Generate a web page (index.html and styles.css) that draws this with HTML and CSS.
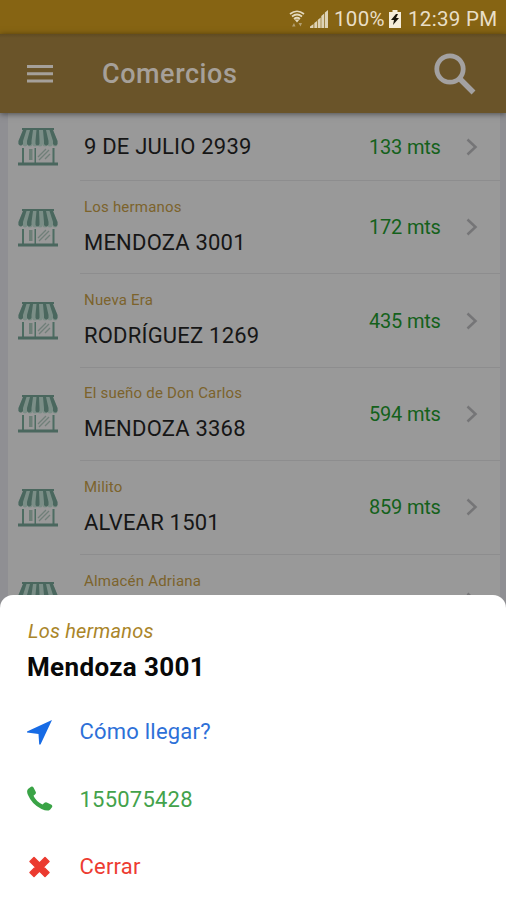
FILE: index.html
```
<!DOCTYPE html>
<html lang="es">
<head>
<meta charset="utf-8">
<title>Comercios</title>
<link rel="stylesheet" href="styles.css">
</head>
<body>
<svg class="defs" aria-hidden="true">
  <symbol id="store" viewBox="0 0 40 38">
    <path fill="#4a675e" d="M4 0h32v2H4z"/>
    <path fill="#7b8e87" d="M5 2h30l4.500 11v3a2.500 2.500 0 0 1-5 0 2.500 2.500 0 0 1-5 0 2.500 2.500 0 0 1-5 0 2.500 2.500 0 0 1-5 0 2.500 2.500 0 0 1-5 0 2.500 2.500 0 0 1-5 0 2.500 2.500 0 0 1-5 0 2.200 2.200 0 0 1-4 0v-3z"/>
    <path fill="#4a675e" d="M5 2h3.500L5 13v3q-2 3-4.500 0v-3zM12 2h3l-1.500 11v3q-2.500 3-4.500 0v-3zM18.500 2H21l.5 11v3q-2 3-4 0v-3zM25 2h3l2.500 11v3q-2 3-4.500 0v-3zM31.500 2H35l4.500 11v3q-2 3-4.500 0v-3z"/>
    <path fill="#4d6d62" d="M4 20h2v15H4zM34.500 20h2v15h-2zM16.500 20H18v15h-1.500z"/>
    <path fill="#4a675e" d="M0 34.500h40v3H0z"/>
    <path fill="#6c7f77" d="M11 21h3.500v11H11z"/>
    <path stroke="#707f79" stroke-width="1.300" fill="none" d="M20 29l8-8M21 32l10-10M27 31l5-5"/>
  </symbol>
  <symbol id="chevron" viewBox="0 0 12 18"><path d="M1.500 1.500L9.500 9L1.500 16.500" fill="none" stroke="#757577" stroke-width="2.500"/></symbol>
</svg>
<div class="screen">
  <header class="status">
    <svg class="wifi" viewBox="0 0 16 18" fill="none" stroke="#e4d9bd">
      <path d="M1 4Q8-1.500 15 4M3 6.500Q8 2.500 13 6.500M5 9Q8 6.500 11 9" stroke-width="1.700"/>
      <path d="M5.500 9.500h5L8 12.500z" fill="#e4d9bd" stroke="none"/>
      <path d="M3 16.500l2-3.500 1.500 3.500zM9.500 13h3.500l-1.500 3.500z" fill="#b4a071" stroke="none"/>
    </svg>
    <svg class="signal" viewBox="0 0 18 18" fill="#ded3b6"><path d="M0 18v-1.500L3.500 14v4zM4.300 18v-5L7 11v7zM7.700 18v-8l3-2.500V18zM11.300 18V6L14.200 3.500V18zM14.900 18V2.500L18 0v18z"/></svg>
    <span class="charge">100%</span>
    <svg class="battery" viewBox="0 0 12 18"><path fill="#f4eddb" d="M3.500 0h5v2H12v16H0V2h3.500z"/><path d="M7 4L2 10h3l-1 5 6-7H7l2-4z" fill="#18150c"/></svg>
    <span class="clock">12:39 PM</span>
  </header>
  <div class="appbar">
    <svg class="menu" viewBox="0 0 26 18" fill="#a5a09a"><path d="M0 0h26v3H0zM0 7.200h26v3H0zM0 14.400h26v3H0z"/></svg>
    <h1 class="title">Comercios</h1>
    <svg class="search" viewBox="0 0 42 42" fill="none" stroke="#a3a1a1"><circle cx="16" cy="16" r="13.200" stroke-width="4.800"/><path d="M26 26L39.500 39.500" stroke-width="5.500"/></svg>
  </div>
  <main class="list">
    <div class="row first"><svg class="store"><use href="#store"/></svg><div class="body"><div class="place"><div class="address">9 DE JULIO 2939</div></div><span class="distance">133 mts</span><svg class="chevron"><use href="#chevron"/></svg></div></div>
    <div class="row"><svg class="store"><use href="#store"/></svg><div class="body"><div class="place"><div class="name">Los hermanos</div><div class="address">MENDOZA 3001</div></div><span class="distance">172 mts</span><svg class="chevron"><use href="#chevron"/></svg></div></div>
    <div class="row"><svg class="store"><use href="#store"/></svg><div class="body"><div class="place"><div class="name">Nueva Era</div><div class="address">RODRÍGUEZ 1269</div></div><span class="distance">435 mts</span><svg class="chevron"><use href="#chevron"/></svg></div></div>
    <div class="row"><svg class="store"><use href="#store"/></svg><div class="body"><div class="place"><div class="name">El sueño de Don Carlos</div><div class="address">MENDOZA 3368</div></div><span class="distance">594 mts</span><svg class="chevron"><use href="#chevron"/></svg></div></div>
    <div class="row"><svg class="store"><use href="#store"/></svg><div class="body"><div class="place"><div class="name">Milito</div><div class="address">ALVEAR 1501</div></div><span class="distance">859 mts</span><svg class="chevron"><use href="#chevron"/></svg></div></div>
    <div class="row last"><svg class="store"><use href="#store"/></svg><div class="body"><div class="place"><div class="name">Almacén Adriana</div></div><svg class="chevron"><use href="#chevron"/></svg></div></div>
  </main>
  <section class="sheet">
    <p class="sheet-name">Los hermanos</p>
    <h2 class="sheet-address">Mendoza 3001</h2>
    <div class="action go"><svg viewBox="0 0 26 26"><path fill="#176be5" d="M25 1L13.500 25.500h-1.300L11.500 15 0 13.500v-1z"/></svg><span>Cómo llegar?</span></div>
    <div class="action call"><svg viewBox="0 0 26 26"><path fill="#3aa346" d="M1 3L4 .8Q5.500 0 6.500 1.500L8.800 6Q9.300 7.300 8.200 8.200L6.500 9.800Q9 15.500 15.500 18.500L17.500 16.800Q18.500 16 19.800 16.500L24.500 18.800Q25.800 19.800 25 21.300L23 23.700Q20.500 25.800 14.500 23Q5 18.500 1 9Q-.8 5 1 3z"/></svg><span>155075428</span></div>
    <div class="action close"><svg viewBox="0 0 26 26"><path fill="#eb3a2f" stroke="#eb3a2f" stroke-width="1.500" stroke-linejoin="round" d="M7 3.500l5.500 5.500L18 3.500l4 4-5.500 5.500 5.500 5.500-4 4-5.500-5.500L7 22.500l-4-4L8.500 13 3 7.500z"/></svg><span>Cerrar</span></div>
  </section>
</div>
</body>
</html>
```
FILE: styles.css
```
* { box-sizing: border-box; }
body { margin: 0; font-family: Roboto, "Liberation Sans", sans-serif; }
h1, h2, p { margin: 0; }
svg { display: block; flex: none; }
.defs { position: absolute; width: 0; height: 0; }
.screen { position: relative; width: 506px; height: 900px; overflow: hidden; background: #8f8f93; }
.status { display: flex; align-items: center; justify-content: flex-end; height: 34px; padding: 3px 8px 0 0; background: #866413; color: #e9dfc7; font-size: 20.5px; white-space: nowrap; }
.wifi { width: 16px; height: 18px; margin-right: 5px; }
.signal { width: 18px; height: 18px; margin-right: 6px; }
.charge { width: 51px; letter-spacing: .3px; }
.battery { width: 12px; height: 18px; margin: 0 7px 0 4px; }
.clock { width: 90px; letter-spacing: .3px; }
.appbar { position: relative; display: flex; align-items: center; height: 79px; padding: 0 30px 0 27px; background: linear-gradient(#5f4b22, #6a5429 4px); box-shadow: 0 1px 6px rgba(0, 0, 0, .5); }
.menu { width: 26px; height: 18px; }
.title { flex: 1; margin-left: 49px; color: #a6a099; font-size: 27px; font-weight: 500; line-height: 32px; letter-spacing: .55px; }
.search { width: 42px; height: 42px; }
.list { margin: 0 6px 0 8px; height: 787px; background: #999; }
.row { display: flex; align-items: center; height: 93.4px; padding-left: 10px; }
.row.first { height: 68px; }
.store { width: 40px; height: 38px; margin-right: 22px; }
.body { display: flex; flex: 1; align-items: center; align-self: stretch; padding: 0 22px 0 4px; border-bottom: 1px solid #8d8d8e; }
.place { flex: 1; padding-bottom: 5px; white-space: nowrap; }
.first .place { padding-bottom: 0; }
.name { height: 35px; color: #7c632c; font-size: 15px; line-height: 35px; letter-spacing: .2px; }
.address { height: 35px; color: #161616; font-size: 22px; line-height: 35px; letter-spacing: .2px; }
.distance { width: 72px; color: #14611b; font-size: 20px; letter-spacing: -.2px; white-space: nowrap; }
.chevron { width: 12px; height: 18px; margin-left: 25px; }
.last .place { align-self: flex-start; padding-top: 9px; }
.sheet { position: absolute; left: 0; right: 0; bottom: 0; height: 305px; padding: 24px 27px 0; border-radius: 13px 13px 0 0; background: #fff; }
.sheet-name { height: 25px; padding-left: 1px; color: #aa8529; font-size: 20px; font-style: italic; line-height: 25px; letter-spacing: .2px; }
.sheet-address { height: 54px; color: #080808; font-size: 26px; font-weight: 700; line-height: 46px; letter-spacing: .35px; }
.action { display: flex; align-items: center; gap: 26.500px; height: 67.500px; font-size: 22px; letter-spacing: .22px; }
.action svg { width: 26px; height: 26px; }
.go { color: #2d70d8; }
.call { color: #43a24b; }
.close { color: #ed3c32; }
```
